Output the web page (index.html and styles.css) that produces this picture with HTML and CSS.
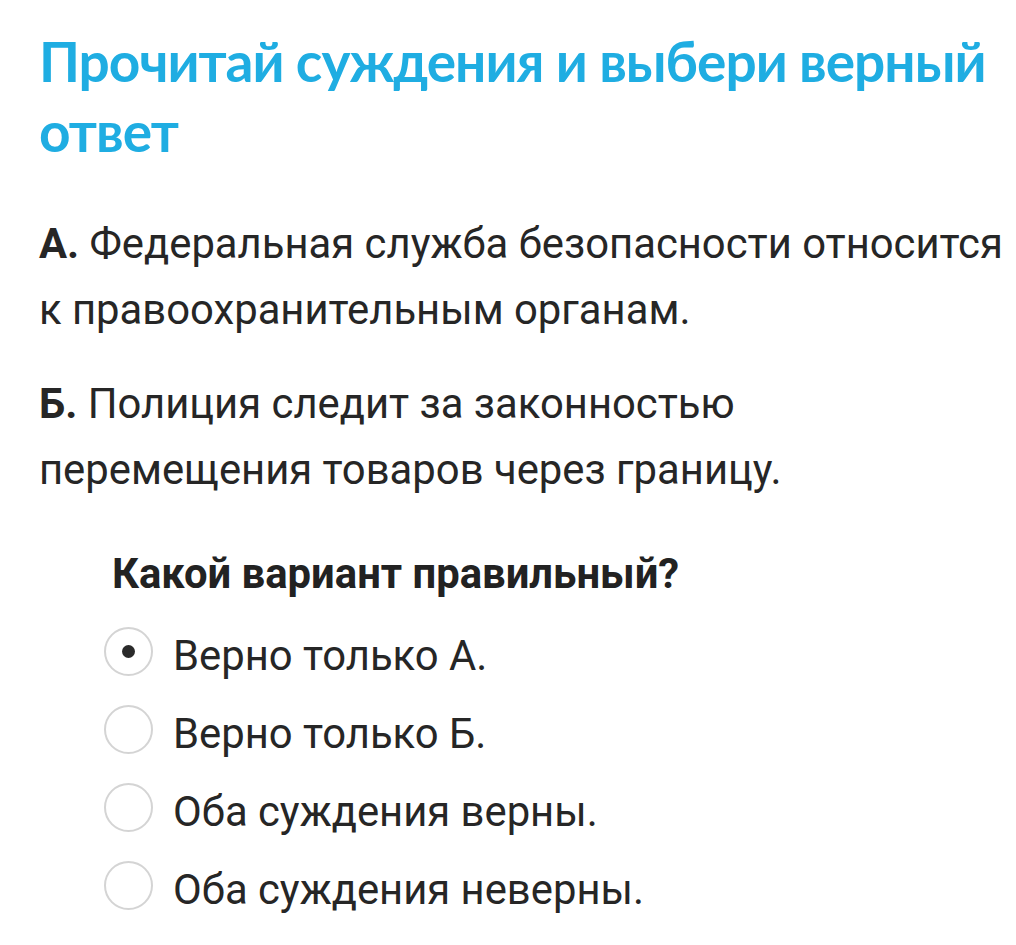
FILE: index.html
```html
<!DOCTYPE html>
<html lang="ru">
<head>
<meta charset="utf-8">
<link rel="stylesheet" href="styles.css">
</head>
<body>
<main class="page">
  <h1 class="title">Прочитай суждения и выбери верный ответ</h1>
  <div class="statements">
    <p class="statement"><b>А.</b> Федеральная служба безопасности относится<br>к правоохранительным органам.</p>
    <p class="statement"><b>Б.</b> Полиция следит за законностью<br>перемещения товаров через границу.</p>
  </div>
  <section class="quiz">
    <h2 class="question">Какой вариант правильный?</h2>
    <ul class="options">
      <li class="option"><span class="radio checked"></span><span class="label">Верно только А.</span></li>
      <li class="option"><span class="radio"></span><span class="label">Верно только Б.</span></li>
      <li class="option"><span class="radio"></span><span class="label">Оба суждения верны.</span></li>
      <li class="option"><span class="radio"></span><span class="label">Оба суждения неверны.</span></li>
    </ul>
  </section>
</main>
</body>
</html>
```

FILE: styles.css
```css
html, body {
  margin: 0;
  padding: 0;
  background: #ffffff;
}
.page {
  padding: 26px 0 0 39px;
  width: 977px;
  box-sizing: border-box;
  font-family: Roboto, "Noto Sans", sans-serif;
  color: #262626;
}
.title {
  margin: 0;
  font-family: Lato, Inter, "Noto Sans", sans-serif;
  font-weight: 700;
  font-size: 55px;
  line-height: 70px;
  color: #1fade2;
  letter-spacing: -1px;
  width: 975px;
}
.statements {
  margin-top: 45px;
}
.statement {
  margin: 0;
  font-size: 41.8px;
  line-height: 66px;
  white-space: nowrap;
}
.statement + .statement {
  margin-top: 28px;
}
.statement b {
  font-weight: 700;
}
.quiz {
  margin-top: 46px;
  padding-left: 73px;
}
.question {
  margin: 0 0 13px 0;
  font-size: 41.8px;
  line-height: 50px;
  font-weight: 700;
  color: #222222;
}
.options {
  list-style: none;
  margin: 0;
  padding: 0;
}
.option {
  display: flex;
  align-items: center;
  height: 78px;
  margin-left: -8px;
}
.radio {
  box-sizing: border-box;
  width: 49px;
  height: 49px;
  border: 2px solid #d4d4d4;
  border-radius: 50%;
  display: flex;
  align-items: center;
  justify-content: center;
  flex-shrink: 0;
}
.radio.checked::after {
  content: "";
  width: 13px;
  height: 13px;
  border-radius: 50%;
  background: #2a2a2a;
}
.label {
  margin-left: 20px;
  padding-top: 8px;
  font-size: 41.8px;
}
```
